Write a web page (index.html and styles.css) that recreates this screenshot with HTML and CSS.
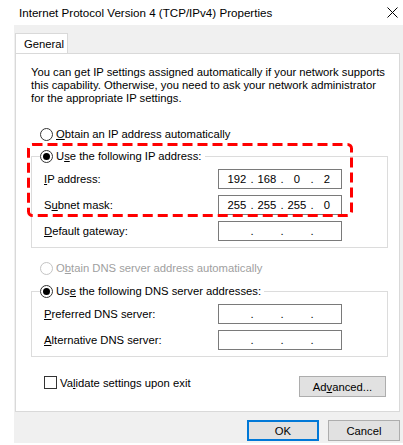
FILE: index.html
```html
<!DOCTYPE html>
<html lang="en">
<head>
    <meta charset="UTF-8">
    <meta name="viewport" content="width=device-width, initial-scale=1.0">
    <title>Internet Protocol Version 4 (TCP/IPv4) Properties</title>
    <link rel="stylesheet" href="styles.css">
</head>
<body>
    <div class="titlebar">
        <span class="title">Internet Protocol Version 4 (TCP/IPv4) Properties</span>
        <svg class="close" width="11" height="11" viewBox="0 0 11 11">
            <path d="M0.5 0.5 L10.5 10.5 M10.5 0.5 L0.5 10.5" stroke="#000" stroke-width="1" fill="none"/>
        </svg>
    </div>

    <div class="dialog">
        <div class="tabs">
            <div class="tab">General</div>
        </div>

        <div class="panel">
            <p class="intro">You can get IP settings assigned automatically if your network supports this capability. Otherwise, you need to ask your network administrator for the appropriate IP settings.</p>

            <div class="option">
                <span class="radio"></span>
                <span><u>O</u>btain an IP address automatically</span>
            </div>

            <div class="group">
                <div class="group-head">
                    <span class="radio checked"></span>
                    <span>U<u>s</u>e the following IP address:</span>
                </div>
                <div class="rows">
                    <div class="row">
                        <span class="label"><u>I</u>P address:</span>
                        <div class="ip">
                            <span class="seg">192</span><span class="dot">.</span>
                            <span class="seg">168</span><span class="dot">.</span>
                            <span class="seg">0</span><span class="dot">.</span>
                            <span class="seg">2</span>
                        </div>
                    </div>
                    <div class="row">
                        <span class="label">S<u>u</u>bnet mask:</span>
                        <div class="ip">
                            <span class="seg">255</span><span class="dot">.</span>
                            <span class="seg">255</span><span class="dot">.</span>
                            <span class="seg">255</span><span class="dot">.</span>
                            <span class="seg">0</span>
                        </div>
                    </div>
                    <div class="row">
                        <span class="label"><u>D</u>efault gateway:</span>
                        <div class="ip">
                            <span class="seg"></span><span class="dot">.</span>
                            <span class="seg"></span><span class="dot">.</span>
                            <span class="seg"></span><span class="dot">.</span>
                            <span class="seg"></span>
                        </div>
                    </div>
                </div>
            </div>

            <div class="option option-dns disabled">
                <span class="radio"></span>
                <span>O<u>b</u>tain DNS server address automatically</span>
            </div>

            <div class="group group-dns">
                <div class="group-head">
                    <span class="radio checked"></span>
                    <span>Us<u>e</u> the following DNS server addresses:</span>
                </div>
                <div class="rows">
                    <div class="row">
                        <span class="label"><u>P</u>referred DNS server:</span>
                        <div class="ip">
                            <span class="seg"></span><span class="dot">.</span>
                            <span class="seg"></span><span class="dot">.</span>
                            <span class="seg"></span><span class="dot">.</span>
                            <span class="seg"></span>
                        </div>
                    </div>
                    <div class="row">
                        <span class="label"><u>A</u>lternative DNS server:</span>
                        <div class="ip">
                            <span class="seg"></span><span class="dot">.</span>
                            <span class="seg"></span><span class="dot">.</span>
                            <span class="seg"></span><span class="dot">.</span>
                            <span class="seg"></span>
                        </div>
                    </div>
                </div>
            </div>

            <div class="bottom">
                <div class="check">
                    <span class="box"></span>
                    <span>Va<u>l</u>idate settings upon exit</span>
                </div>
                <button type="button" class="btn btn-advanced">Ad<u>v</u>anced...</button>
            </div>

            <!-- marca roja sobre el bloque de IP -->
            <svg class="highlight" width="326" height="74" viewBox="0 0 326 74">
                <rect x="1.5" y="1.5" width="323" height="71" rx="4" ry="4" fill="none" stroke="#f00" stroke-width="3" stroke-dasharray="10 5"/>
            </svg>
        </div>

        <div class="footer">
            <button type="button" class="btn btn-ok">OK</button>
            <button type="button" class="btn">Cancel</button>
        </div>
    </div>
</body>
</html>
```

FILE: styles.css
```css
body {
  margin: 0;
  padding: 0;
  background-color: #ffffff;
  font-family: "Liberation Sans", Arial, sans-serif;
  font-size: 11.25px;
  color: #000000;
}

u {
  text-decoration: underline;
  text-underline-offset: 1px;
}

.titlebar {
  height: 25px;
  display: flex;
  align-items: center;
  justify-content: space-between;
  padding: 0 5px 0 19px;
}

.title {
  font-size: 11.6px;
}

.close {
  display: block;
}

.dialog {
  margin-left: 14px;
  height: 418px;
  box-sizing: border-box;
  padding: 8px 3px 2px 1px;
  background-color: #f0f0f0;
}

.tabs {
  display: flex;
}

.tab {
  position: relative;
  width: 53px;
  height: 21px;
  box-sizing: border-box;
  margin-bottom: -1px;
  padding-left: 8px;
  line-height: 20px;
  border: 1px solid #d9d9d9;
  border-bottom: 0;
  background-color: #ffffff;
}

.panel {
  position: relative;
  height: 359px;
  box-sizing: border-box;
  padding: 12px 11px 0 15px;
  border: 1px solid #d9d9d9;
  background-color: #ffffff;
}

.intro {
  margin: 0;
  line-height: 13px;
}

.option, .group-head, .check {
  display: flex;
  align-items: center;
  height: 16px;
}

.option {
  margin: 21px 0 0 9px;
}

.option-dns {
  margin-top: 12px;
}

.disabled {
  color: #a0a0a0;
}

.radio {
  width: 13px;
  height: 13px;
  box-sizing: border-box;
  border: 1px solid #333333;
  border-radius: 50%;
  background-color: #ffffff;
  margin-right: 3px;
  display: flex;
  align-items: center;
  justify-content: center;
}

.disabled .radio {
  border-color: #c4c4c4;
}

.radio.checked::after {
  content: "";
  width: 7px;
  height: 7px;
  border-radius: 50%;
  background-color: #000000;
}

.group {
  margin-top: 14px;
  border: 1px solid #dcdcdc;
  padding: 0 0 6px 12px;
}

.group-dns {
  margin-top: 15px;
}

.group-head {
  margin: -9px 0 0 -4px;
  width: max-content;
  padding-right: 3px;
  background-color: #ffffff;
}

.rows {
  margin-top: 5px;
  display: flex;
  flex-direction: column;
  gap: 6px;
}

.row {
  display: flex;
  align-items: center;
  height: 20px;
}

.label {
  width: 174px;
}

.ip {
  width: 124px;
  height: 20px;
  box-sizing: border-box;
  border: 1px solid #7a7a7a;
  padding-left: 6px;
  display: flex;
  align-items: center;
}

.seg {
  width: 24px;
  text-align: center;
}

.dot {
  width: 6px;
  text-align: center;
}

.bottom {
  margin-top: 19px;
  display: flex;
  justify-content: space-between;
  align-items: flex-start;
  padding: 0 2px 0 13px;
}

.check {
  height: 13px;
}

.box {
  width: 13px;
  height: 13px;
  box-sizing: border-box;
  border: 1px solid #333333;
  background-color: #ffffff;
  margin-right: 3px;
}

.btn {
  width: 87px;
  height: 21px;
  box-sizing: border-box;
  padding: 0;
  border: 1px solid #adadad;
  background-color: #e1e1e1;
  font-family: inherit;
  font-size: 11.25px;
  color: #000000;
}

.footer {
  margin-top: 8px;
  display: flex;
  justify-content: flex-end;
  gap: 9px;
}

.footer .btn {
  width: 72px;
}

.btn-ok {
  border: 2px solid #0078d7;
}

.highlight {
  position: absolute;
  left: 11px;
  top: 89px;
}
```
